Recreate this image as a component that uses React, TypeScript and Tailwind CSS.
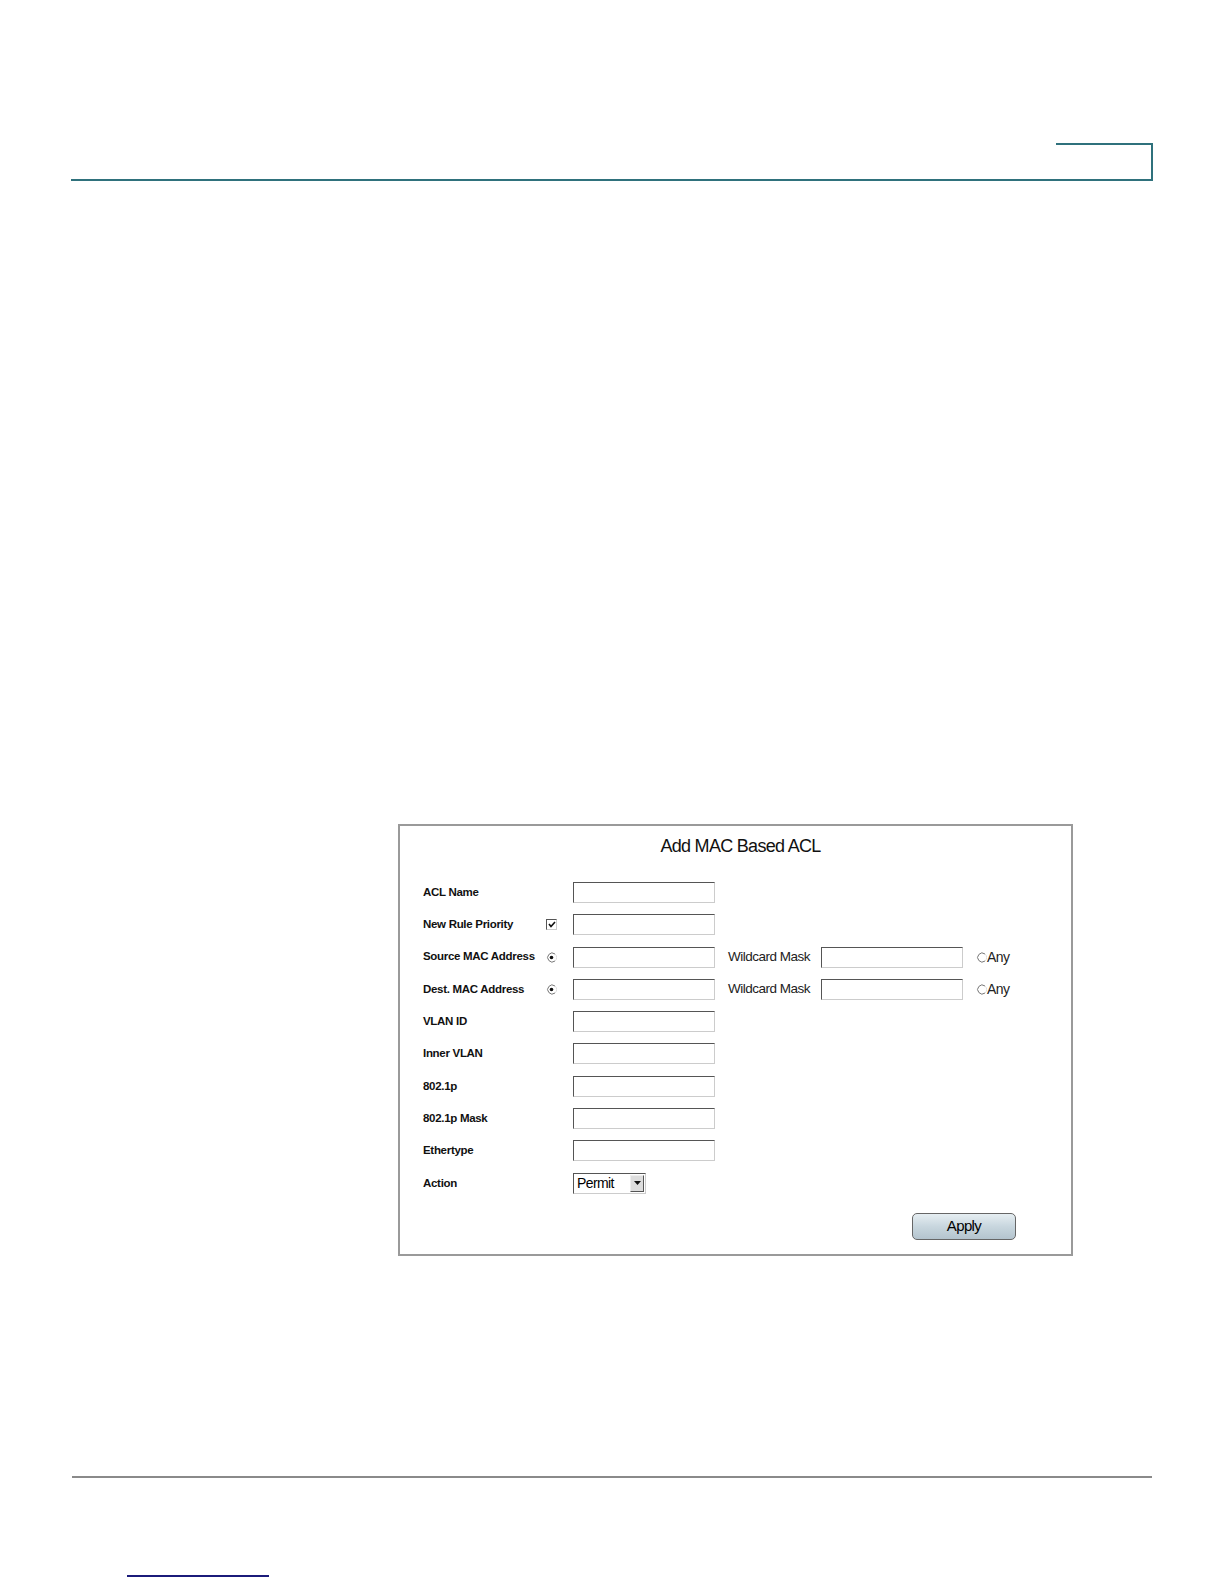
import React from "react";

type Row = {
  label: string;
  marker?: "check" | "radio";
  wildcard?: boolean;
  select?: boolean;
};

const rows: Row[] = [
  { label: "ACL Name" },
  { label: "New Rule Priority", marker: "check" },
  { label: "Source MAC Address", marker: "radio", wildcard: true },
  { label: "Dest. MAC Address", marker: "radio", wildcard: true },
  { label: "VLAN ID" },
  { label: "Inner VLAN" },
  { label: "802.1p" },
  { label: "802.1p Mask" },
  { label: "Ethertype" },
  { label: "Action", select: true },
];

function TextBox() {
  return (
    <div className="h-[21px] w-[142px] border border-t-[#555] border-l-[#555] border-r-[#ccc] border-b-[#ccc] bg-white" />
  );
}

function Check() {
  return (
    <div className="flex h-[11px] w-[11px] items-center justify-center border border-t-[#555] border-l-[#555] border-r-[#ccc] border-b-[#ccc] bg-white">
      <svg width="8" height="7" viewBox="0 0 8 7">
        <path d="M1 3 L3 5.5 L7 1" stroke="#111" strokeWidth="1.6" fill="none" />
      </svg>
    </div>
  );
}

function Radio({ on }: { on: boolean }) {
  return (
    <svg width="11" height="11" viewBox="0 0 11 11">
      <path d="M9 2 A4.5 4.5 0 1 0 9 9" stroke="#777" strokeWidth="1" fill="none" />
      <path d="M9 9 A4.5 4.5 0 0 0 9 2" stroke="#ddd" strokeWidth="1" fill="none" />
      {on && <circle cx="5.5" cy="5.5" r="1.8" fill="#111" />}
    </svg>
  );
}

function SelectBox() {
  return (
    <div className="flex h-[21px] w-[73px] items-center border border-t-[#555] border-l-[#555] border-r-[#ccc] border-b-[#ccc] bg-white">
      <span className="flex-1 pl-[3px] text-[14px] leading-none tracking-[-0.6px] text-black">Permit</span>
      <div className="mr-[1px] flex h-[17px] w-[14px] items-center justify-center border border-t-[#eee] border-l-[#eee] border-r-[#555] border-b-[#555] bg-[#ddd]">
        <svg width="7" height="4" viewBox="0 0 7 4">
          <path d="M0 0 H7 L3.5 4 Z" fill="#111" />
        </svg>
      </div>
    </div>
  );
}

export default function App() {
  return (
    <div
      className="h-[1584px] w-full overflow-hidden bg-white"
      style={{ fontFamily: '"Liberation Sans", Arial, sans-serif' }}
    >
      {/* header rule with tab */}
      <div className="pt-[143px]">
        <div className="ml-[1056px] h-[36px] w-[97px] border-t-2 border-r-2 border-[#2f717c]" />
        <div className="ml-[71px] h-[2px] w-[1082px] bg-[#2f717c]" />
      </div>

      {/* screenshot panel */}
      <div className="ml-[398px] mt-[643px] w-[675px] border-2 border-[#9a9a9a] bg-white">
        <div className="pl-[10px] pt-[9px] text-center text-[18px] leading-[22px] tracking-[-0.7px] text-[#111]">
          Add MAC Based ACL
        </div>
        <div className="mt-[25px] flex flex-col gap-[11.3px] pl-[23px]">
          {rows.map((r) => (
            <div key={r.label} className="flex h-[21px] items-center">
              <div className="w-[123px] text-[11.5px] font-bold tracking-[-0.3px] text-[#111]">
                {r.label}
              </div>
              <div className="flex w-[27px] items-center">
                {r.marker === "check" && <Check />}
                {r.marker === "radio" && <Radio on />}
              </div>
              {r.select ? <SelectBox /> : <TextBox />}
              {r.wildcard && (
                <>
                  <div className="ml-[13px] w-[93px] text-[13.5px] tracking-[-0.5px] text-[#222]">
                    Wildcard Mask
                  </div>
                  <TextBox />
                  <div className="ml-[13px] flex items-center">
                    <Radio on={false} />
                    <span className="text-[14px] tracking-[-0.5px] text-[#222]">Any</span>
                  </div>
                </>
              )}
            </div>
          ))}
        </div>
        <div className="flex justify-end pb-[14px] pr-[55px] pt-[19px]">
          <button className="h-[27px] w-[104px] rounded-[5px] border border-[#666] bg-gradient-to-b from-[#e6eef2] via-[#c8d6de] to-[#b4c4ce] text-[15px] tracking-[-0.6px] text-black">
            Apply
          </button>
        </div>
      </div>

      {/* footer rule */}
      <div className="ml-[72px] mt-[220px] h-[2px] w-[1080px] bg-[#8a8a8a]" />
      <div className="ml-[127px] mt-[97px] h-[2px] w-[142px] bg-[#1b1b7a]" />
    </div>
  );
}
